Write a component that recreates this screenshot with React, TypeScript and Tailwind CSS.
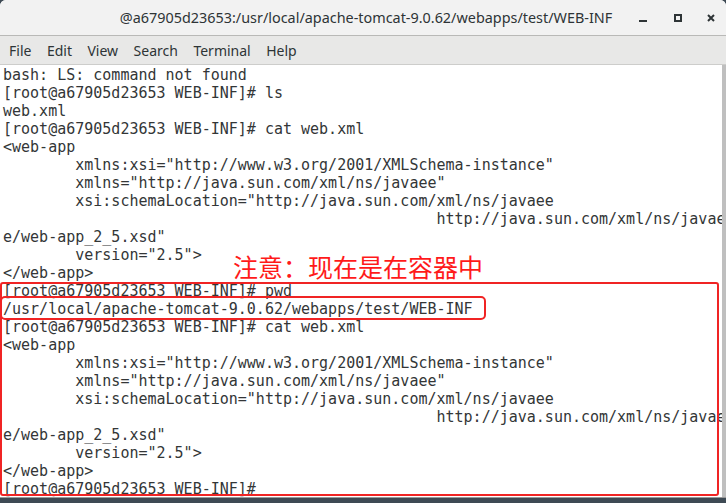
import React from 'react';

const lines = [
  'bash: LS: command not found',
  '[root@a67905d23653 WEB-INF]# ls',
  'web.xml',
  '[root@a67905d23653 WEB-INF]# cat web.xml',
  '<web-app',
  '        xmlns:xsi="http://www.w3.org/2001/XMLSchema-instance"',
  '        xmlns="http://java.sun.com/xml/ns/javaee"',
  '        xsi:schemaLocation="http://java.sun.com/xml/ns/javaee',
  '                                                http://java.sun.com/xml/ns/javae',
  'e/web-app_2_5.xsd"',
  '        version="2.5">',
  '</web-app>',
  '[root@a67905d23653 WEB-INF]# pwd',
  '/usr/local/apache-tomcat-9.0.62/webapps/test/WEB-INF',
  '[root@a67905d23653 WEB-INF]# cat web.xml',
  '<web-app',
  '        xmlns:xsi="http://www.w3.org/2001/XMLSchema-instance"',
  '        xmlns="http://java.sun.com/xml/ns/javaee"',
  '        xsi:schemaLocation="http://java.sun.com/xml/ns/javaee',
  '                                                http://java.sun.com/xml/ns/javae',
  'e/web-app_2_5.xsd"',
  '        version="2.5">',
  '</web-app>',
  '[root@a67905d23653 WEB-INF]# ',
];

const menus = ['File', 'Edit', 'View', 'Search', 'Terminal', 'Help'];

function WindowButtons() {
  return (
    <div className="absolute right-0 top-0 h-full flex items-center">
      <svg width="34" height="36" viewBox="0 0 34 36">
        <rect x="11" y="20" width="8" height="2" fill="#2e3436" />
      </svg>
      <svg width="34" height="36" viewBox="0 0 34 36">
        <rect x="13" y="15" width="6" height="6" fill="none" stroke="#2e3436" strokeWidth="2" />
      </svg>
      <svg width="30" height="36" viewBox="0 0 30 36">
        <path d="M12 15 L18 21 M18 15 L12 21" stroke="#2e3436" strokeWidth="2" />
      </svg>
    </div>
  );
}

export default function App() {
  return (
    <div className="w-[726px] h-[503px] bg-[#3e4a54] overflow-hidden">
      <div className="h-[498px] flex flex-col bg-white rounded-t-[6px] overflow-hidden border-b border-[#9a9a9a]">
        {/* title bar */}
        <div className="relative h-[36px] shrink-0 bg-[#f2f2f2] border-b border-[#b9b9b7] flex items-center justify-center">
          <span
            className="text-[14.4px] text-[#2e3436] pl-[6px]"
            style={{ fontFamily: '"Noto Sans", "Open Sans", sans-serif' }}
          >
            @a67905d23653:/usr/local/apache-tomcat-9.0.62/webapps/test/WEB-INF
          </span>
          <WindowButtons />
        </div>

        {/* menu bar */}
        <div
          className="h-[29px] shrink-0 bg-[#e8e8e7] border-b border-[#cdcdcb] flex items-center pl-[9px] gap-[15.5px] text-[14px] text-[#2e3436]"
          style={{ fontFamily: '"Noto Sans", "Open Sans", sans-serif' }}
        >
          {menus.map((m) => (
            <span key={m}>{m}</span>
          ))}
        </div>

        {/* terminal */}
        <div className="flex-1 flex min-h-0">
          <div className="relative flex-1 overflow-hidden pt-[1px] pl-[3px]">
            <pre
              className="text-[15px] leading-[18px] text-[#333637] whitespace-pre"
              style={{ fontFamily: '"DejaVu Sans Mono", monospace' }}
            >
              {lines.join('\n')}
            </pre>

            {/* annotations */}
            <div
              className="absolute left-[233px] top-[187px] text-[25px] leading-[28px] text-[#ff1a1a]"
              style={{ fontFamily: '"Noto Sans CJK SC", sans-serif' }}
            >
              注意：现在是在容器中
            </div>
            <div className="absolute left-[0px] top-[217px] w-[719px] bottom-[1px] border-2 border-[#f02424] rounded-[3px]" />
            <div className="absolute left-[0px] top-[231px] w-[486px] h-[24px] border-2 border-[#f02424] rounded-[5px]" />
          </div>
          <div className="w-[4px] bg-[#bfbfbf]" />
        </div>
      </div>
    </div>
  );
}
